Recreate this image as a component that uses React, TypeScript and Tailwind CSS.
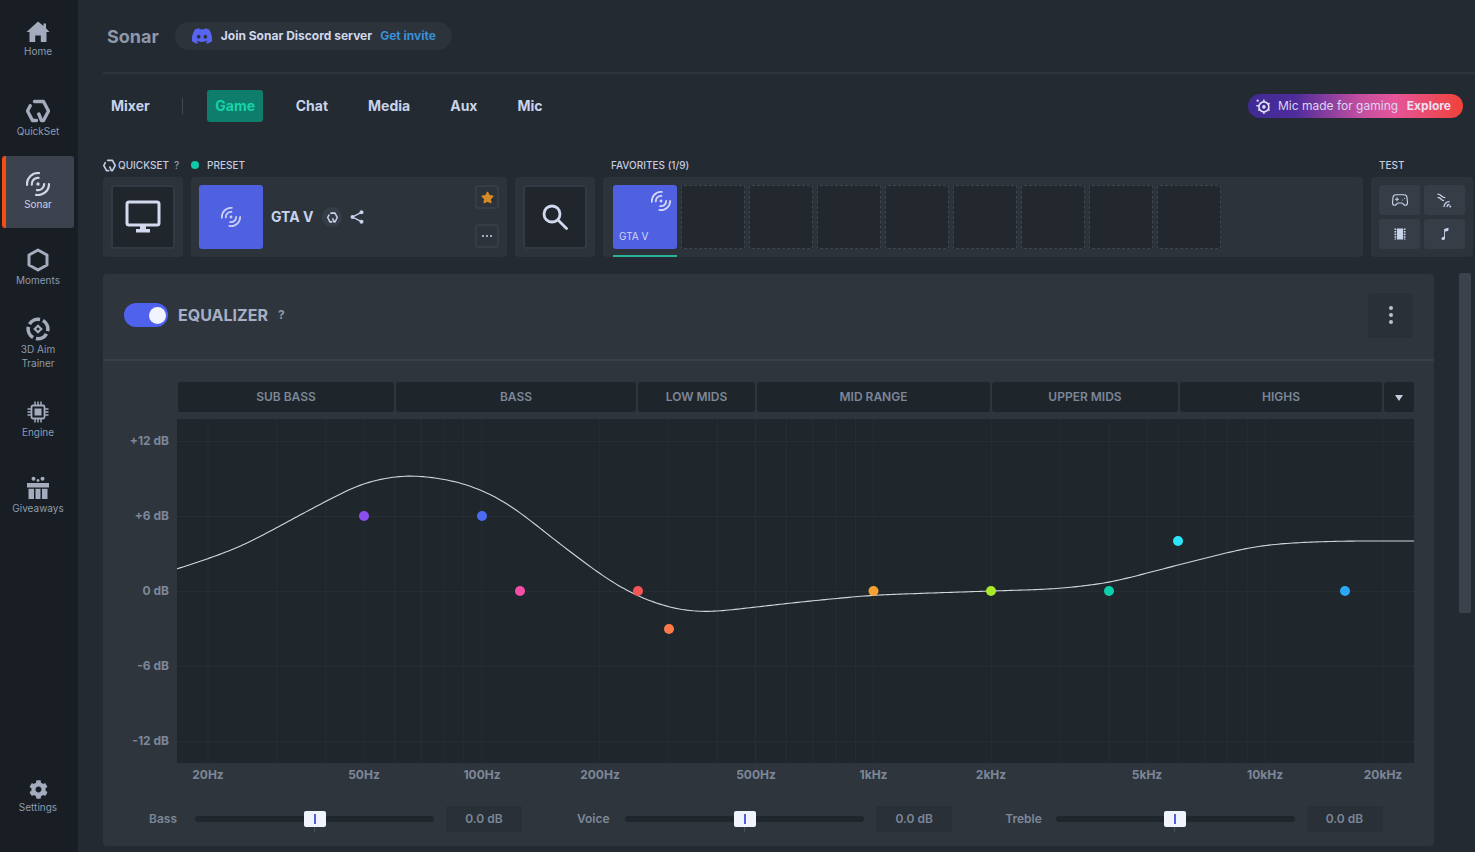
import { Gamepad2 } from "lucide-react";
import { FaCog, FaDiscord, FaStar } from "react-icons/fa";
import { IoMusicalNote } from "react-icons/io5";

const polar = (r: number, deg: number) => {
  const a = (deg * Math.PI) / 180;
  return `${(12 + r * Math.cos(a)).toFixed(2)} ${(12 + r * Math.sin(a)).toFixed(2)}`;
};
const arc = (r: number, from: number, to: number) =>
  `M${polar(r, from)} A${r} ${r} 0 0 1 ${polar(r, to)}`;

function SonarIcon({ size = 24, className = "" }: { size?: number; className?: string }) {
  return (
    <svg width={size} height={size} viewBox="0 0 24 24" fill="none" stroke="currentColor" strokeWidth="2.2" strokeLinecap="round" className={className}>
      <path d={arc(11, 175, 275)} />
      <path d={arc(6.2, 175, 275)} />
      <path d={arc(11, 0, 100)} />
      <path d={arc(6.2, 0, 100)} />
      <circle cx="12" cy="12" r="1.7" fill="currentColor" stroke="none" />
    </svg>
  );
}

function QuickSetIcon({ size = 24, width = 3.4, className = "" }: { size?: number; width?: number; className?: string }) {
  return (
    <svg width={size} height={size} viewBox="0 0 24 24" fill="none" stroke="currentColor" strokeWidth={width} strokeLinejoin="round" strokeLinecap="round" className={className}>
      <path d="M8.5 2.5H17.5L22.5 12L17.5 21.5H15.5L12.8 15" />
      <path d="M10.5 21.5H6.5L1.5 12L4.2 6.8" />
    </svg>
  );
}

function HomeIcon() {
  return (
    <svg width="24" height="22" viewBox="0 0 24 22" fill="currentColor">
      <path d="M12 0.5L17.5 5V2.5H20V7.2L23.5 11H20.5V21H14.8V14.5H9.2V21H3.5V11H0.5Z" />
    </svg>
  );
}

function MomentsIcon() {
  return (
    <svg width="24" height="24" viewBox="0 0 24 24" fill="none" stroke="currentColor" strokeWidth="3" strokeLinejoin="round">
      <path d="M12 2L21 7V17L12 22L3 17V7Z" />
    </svg>
  );
}

function AimIcon() {
  return (
    <svg width="24" height="24" viewBox="0 0 24 24" fill="none" stroke="currentColor" strokeLinecap="butt">
      <g strokeWidth="3.6">
        <path d={arc(9.8, 300, 372)} />
        <path d={arc(9.8, 30, 102)} />
        <path d={arc(9.8, 120, 192)} />
        <path d={arc(9.8, 210, 282)} />
      </g>
      <path d="M12 7.2L16.8 12L12 16.8L7.2 12Z" fill="currentColor" stroke="none" />
      <path d="M12 10.2L13.8 12L12 13.8L10.2 12Z" fill="#181e23" stroke="none" />
    </svg>
  );
}

function ChipIcon() {
  return (
    <svg width="24" height="24" viewBox="0 0 24 24" fill="none" stroke="currentColor">
      <rect x="5.5" y="5.5" width="13" height="13" rx="1.5" strokeWidth="1.8" />
      <rect x="8.5" y="8.5" width="7" height="7" fill="currentColor" stroke="none" />
      <path d="M9 1.5V5M12 1.5V5M15 1.5V5M9 19V22.5M12 19V22.5M15 19V22.5M1.5 9H5M1.5 12H5M1.5 15H5M19 9H22.5M19 12H22.5M19 15H22.5" strokeWidth="1.5" />
    </svg>
  );
}

function GiftIcon() {
  return (
    <svg width="24" height="24" viewBox="0 0 24 24" fill="currentColor">
      <circle cx="7.5" cy="2.8" r="2" />
      <circle cx="16.5" cy="2.8" r="2" />
      <circle cx="12" cy="4.5" r="1.4" />
      <rect x="1" y="7" width="22" height="4.5" />
      <rect x="2.5" y="12.8" width="5.5" height="10.2" />
      <rect x="9.5" y="12.8" width="5" height="10.2" />
      <rect x="16" y="12.8" width="5.5" height="10.2" />
    </svg>
  );
}

function MonitorIcon() {
  return (
    <svg width="36" height="34" viewBox="0 0 36 34" fill="none">
      <rect x="2" y="2" width="32" height="23" rx="2" stroke="#d3daf0" strokeWidth="3" />
      <rect x="15" y="26" width="6" height="4" fill="#d3daf0" />
      <rect x="11" y="29" width="14" height="3.5" fill="#d3daf0" />
    </svg>
  );
}

function SearchIcon() {
  return (
    <svg width="26" height="26" viewBox="0 0 26 26" fill="none" stroke="#d3daf0" strokeWidth="2.8" strokeLinecap="round">
      <circle cx="10" cy="10" r="8" />
      <path d="M16 16L24.5 24.5" />
    </svg>
  );
}

function ShareIcon() {
  return (
    <svg width="14" height="14" viewBox="0 0 14 14" fill="#c8d3ec" stroke="#c8d3ec" strokeWidth="1.4">
      <path d="M11.5 2.3L2.5 7L11.5 11.7" fill="none" />
      <circle cx="11.5" cy="2.3" r="2" stroke="none" />
      <circle cx="2.5" cy="7" r="2" stroke="none" />
      <circle cx="11.5" cy="11.7" r="2" stroke="none" />
    </svg>
  );
}

function SteelIcon() {
  return (
    <svg width="16" height="16" viewBox="0 0 18 18" fill="none" stroke="#e4e2f6">
      <circle cx="10" cy="10" r="5.6" strokeWidth="1.8" />
      <circle cx="10" cy="10" r="2" fill="#e4e2f6" stroke="none" />
      <path d="M10 1.8V4M16.6 6L14.8 7M16.6 14L14.8 13M10 18V16M3.4 14L5.2 13M1.4 8.6L4.2 9" strokeWidth="1.6" />
      <circle cx="3" cy="3" r="1.3" fill="#e4e2f6" stroke="none" />
    </svg>
  );
}

function WavesIcon() {
  return (
    <svg width="15" height="15" viewBox="0 0 15 15" fill="none" stroke="#c8d3ec" strokeWidth="1.3" strokeLinecap="round">
      <path d="M1 1.2C3.4 1.4 4.2 2.6 5.2 3.6C6 4.3 6.8 4.6 7.8 4.7" />
      <path d="M1 4.4C3 4.6 3.6 5.6 4.4 6.4C5 7 5.6 7.4 6.4 7.5" />
      <path d="M7 13.5C7.1 11 9.4 8.8 12 8.7" />
      <path d="M10 13.5C10.1 12.4 11 11.6 12 11.5" />
      <circle cx="13.2" cy="13.4" r="1" fill="#c8d3ec" stroke="none" />
    </svg>
  );
}

function FilmIcon() {
  return (
    <svg width="12" height="12" viewBox="0 0 12 12" fill="#c8d3ec">
      <path d="M0.5 0.5H2.3V2H0.5ZM0.5 3H2.3V4.6H0.5ZM0.5 5.6H2.3V7.2H0.5ZM0.5 8.2H2.3V9.8H0.5ZM0.5 10.4H2.3V11.5H0.5Z" />
      <path d="M9.7 0.5H11.5V2H9.7ZM9.7 3H11.5V4.6H9.7ZM9.7 5.6H11.5V7.2H9.7ZM9.7 8.2H11.5V9.8H9.7ZM9.7 10.4H11.5V11.5H9.7Z" />
      <rect x="3" y="0.5" width="6" height="11" />
    </svg>
  );
}

const navItems = [
  { label: ["Home"], icon: <HomeIcon /> },
  { label: ["QuickSet"], icon: <QuickSetIcon />, nudge: "mt-[3px] -mb-[3px]" },
  { label: ["Sonar"], icon: <SonarIcon />, active: true },
  { label: ["Moments"], icon: <MomentsIcon /> },
  { label: ["3D Aim", "Trainer"], icon: <AimIcon /> },
  { label: ["Engine"], icon: <ChipIcon /> },
  { label: ["Giveaways"], icon: <GiftIcon /> },
];

function NavItem({ label, icon, active, nudge = "" }: { label: string[]; icon: React.ReactNode; active?: boolean; nudge?: string }) {
  return (
    <div
      className={
        active
          ? "w-[72px] h-[72px] rounded-[3px] border-l-4 border-[#f04e13] bg-[#3c434e] flex flex-col items-center justify-center pr-1 pb-[2px]"
          : `w-[72px] h-[72px] flex flex-col items-center justify-center text-[#8f9aae] pb-[2px] ${nudge}`
      }
    >
      <div className={active ? "text-[#d0d6e6]" : "text-[#a3abbd]"}>{icon}</div>
      <div className={active ? "mt-px text-[10px] leading-[14px] text-center text-[#c6cfe5]" : "mt-px text-[10px] leading-[14px] text-center"}>
        {label.map((l) => (
          <div key={l}>{l}</div>
        ))}
      </div>
    </div>
  );
}

function Sidebar() {
  return (
    <aside className="w-[78px] shrink-0 h-full bg-[#181e23] flex flex-col items-start pl-[2px] pt-1 gap-1 pb-[18px]">
      {navItems.map((item) => (
        <NavItem key={item.label[0]} {...item} />
      ))}
      <div className="mt-auto">
        <NavItem label={["Settings"]} icon={<FaCog size={19} />} />
      </div>
    </aside>
  );
}

function Header() {
  return (
    <header className="h-[74px] border-b-2 border-[#2d343b] flex items-center pl-1">
      <span className="text-[18px] font-bold text-[#8e98aa]">Sonar</span>
      <div className="ml-4 h-7 rounded-full bg-[#2c333b] flex items-center pl-4 pr-4">
        <FaDiscord size={22} className="text-[#5865f2]" />
        <span className="ml-2 text-[12px] font-bold text-[#d0d8ec]">Join Sonar Discord server</span>
        <span className="ml-2 text-[12px] font-bold text-[#3a8fd8]">Get invite</span>
      </div>
    </header>
  );
}

function Tabs() {
  return (
    <div className="mt-4 h-8 flex items-center gap-6 text-[14px] font-bold text-[#c8d3ec] pr-3">
      <span className="px-2 pb-px">Mixer</span>
      <span className="w-px h-4 bg-[#434a54]" />
      <span className="w-14 h-8 pb-px pl-px rounded-[3px] bg-[#0e7d6b] text-[#14d3a9] flex items-center justify-center">Game</span>
      <span className="ml-px px-2 pb-px">Chat</span>
      <span className="px-2 pb-px">Media</span>
      <span className="px-2 pb-px">Aux</span>
      <span className="px-2 pb-px">Mic</span>
      <div className="ml-auto h-6 w-[215px] rounded-full bg-[linear-gradient(90deg,#3e2a92_0%,#4f2c9c_22%,#c24f9f_52%,#e5559a_68%,#f04238_100%)] flex items-center pl-[7px] pr-3 text-[12px]">
        <SteelIcon />
        <span className="ml-[7px] font-normal text-[#d9d6f4]">Mic made for gaming</span>
        <span className="ml-auto font-bold text-[#efdff0]">Explore</span>
      </div>
    </div>
  );
}

function Label({ children, className = "" }: { children?: React.ReactNode; className?: string }) {
  return <div className={`h-3 flex items-center text-[10px] leading-3 font-medium text-[#c4cce0] ${className}`}>{children}</div>;
}

function Topics() {
  return (
    <div className="mt-[37px] flex gap-2 text-[10px]">
      <div className="w-20">
        <Label>
          <QuickSetIcon size={13} width={3} className="text-[#c4cce0]" />
          <span className="ml-[2px]">QUICKSET</span>
          <span className="ml-[5px] text-[#8e98aa]">?</span>
        </Label>
        <div className="mt-[6px] h-20 rounded bg-[#2c333b] flex items-center justify-center">
          <div className="w-16 h-16 rounded-[3px] border-2 border-[#333a43] bg-[#20262c] flex items-center justify-center">
            <MonitorIcon />
          </div>
        </div>
      </div>

      <div className="w-[316px]">
        <Label>
          <span className="w-2 h-2 rounded-full bg-[#0fc9a7]" />
          <span className="ml-2">PRESET</span>
        </Label>
        <div className="mt-[6px] h-20 rounded bg-[#2c333b] flex items-center pl-2 pr-2">
          <div className="w-16 h-16 rounded-[3px] bg-[#4f60e0] flex items-center justify-center text-[#c9cff5]">
            <SonarIcon size={20} />
          </div>
          <span className="ml-2 pb-[2px] text-[14px] font-bold text-[#c8d3ec]">GTA V</span>
          <span className="ml-[9px] w-5 h-5 rounded-full bg-[#363d46] flex items-center justify-center text-[#c8d3ec]">
            <QuickSetIcon size={11} width={3.4} />
          </span>
          <span className="ml-2">
            <ShareIcon />
          </span>
          <div className="ml-auto h-16 flex flex-col justify-between">
            <div className="w-6 h-6 rounded-[3px] border-2 border-[#363d46] flex items-center justify-center">
              <FaStar size={13} className="text-[#d58a28]" />
            </div>
            <div className="w-6 h-6 rounded-[3px] border-2 border-[#363d46] flex items-center justify-center gap-[2px] mb-px">
              <span className="w-[2px] h-[2px] rounded-full bg-[#c8d3ec]" />
              <span className="w-[2px] h-[2px] rounded-full bg-[#c8d3ec]" />
              <span className="w-[2px] h-[2px] rounded-full bg-[#c8d3ec]" />
            </div>
          </div>
        </div>
      </div>

      <div className="w-20">
        <Label />
        <div className="mt-[6px] h-20 rounded bg-[#2c333b] flex items-center justify-center">
          <div className="w-16 h-16 rounded-[3px] border-2 border-[#333a43] bg-[#20262c] flex items-center justify-center">
            <SearchIcon />
          </div>
        </div>
      </div>

      <div className="w-[760px]">
        <Label className="pl-2">FAVORITES (1/9)</Label>
        <div className="mt-[6px] h-20 rounded bg-[#2c333b] flex pl-[10px] pt-2 gap-1 relative">
          <div className="w-16 h-16 rounded-[3px] bg-[#4f60e0] text-[#d3d8f7] flex flex-col justify-between items-end p-[6px]">
            <SonarIcon size={20} />
            <span className="self-start text-[10px] leading-3 mb-[1px]">GTA V</span>
          </div>
          {[1, 2, 3, 4, 5, 6, 7, 8].map((slot) => (
            <div key={slot} className="w-16 h-16 rounded-[3px] border border-dashed border-[#3f464f] bg-[#22282e]" />
          ))}
          <div className="absolute left-[10px] bottom-0 w-16 h-[2px] bg-[#2bb39a]" />
        </div>
      </div>

      <div className="w-[102px]">
        <Label className="pl-2">TEST</Label>
        <div className="mt-[6px] h-20 rounded bg-[#2c333b] grid grid-cols-[41px_41px] grid-rows-[30px_30px] gap-1 p-2">
          <div className="rounded-[3px] bg-[#363d46] flex items-center justify-center">
            <Gamepad2 size={18} strokeWidth={1.5} className="text-[#c8d3ec]" />
          </div>
          <div className="rounded-[3px] bg-[#363d46] flex items-center justify-center">
            <WavesIcon />
          </div>
          <div className="rounded-[3px] bg-[#363d46] flex items-center justify-center">
            <FilmIcon />
          </div>
          <div className="rounded-[3px] bg-[#363d46] flex items-center justify-center">
            <IoMusicalNote size={14} className="text-[#c8d3ec]" />
          </div>
        </div>
      </div>
    </div>
  );
}

const bands = [
  { name: "SUB BASS", w: "w-[216px]" },
  { name: "BASS", w: "w-[240px]" },
  { name: "LOW MIDS", w: "w-[117px]" },
  { name: "MID RANGE", w: "w-[233px]" },
  { name: "UPPER MIDS", w: "w-[186px]" },
  { name: "HIGHS", w: "w-[202px]" },
];

// x on screen for a frequency: 20Hz sits at 208, one octave is 118px
const freqX = (hz: number) => 208 + Math.log2(hz / 20) * 117.9;

const gridFreqs = [
  20, 30, 40, 50, 60, 70, 80, 90, 100, 200, 300, 400, 500, 600, 700, 800, 900, 1000, 2000, 3000, 4000, 5000, 6000, 7000,
  8000, 9000, 10000, 20000,
];

// traced from the picture; runs past both edges of the plot, the svg clips it
const curve: [number, number][] = [
  [110, 586], [177, 569.5], [241, 547], [313, 508], [363, 482], [409, 474], [463, 482], [506, 501], [556, 541],
  [609, 581], [638, 597], [670, 608.5], [704, 613], [800, 602], [873, 595], [991, 591], [1057, 589], [1109, 583],
  [1178, 565], [1250, 547], [1286, 543], [1341, 541], [1480, 541],
];

const sampleY = (x: number) => {
  const i = curve.findIndex((p) => p[0] >= x);
  if (i <= 0) return curve[Math.max(i, 0)][1];
  const [x0, y0] = curve[i - 1];
  const [x1, y1] = curve[i];
  return y0 + ((x - x0) / (x1 - x0)) * (y1 - y0);
};

// blur the straight segments a few times so the line comes out as one smooth curve
const blur = (ys: number[], r: number) =>
  ys.map((_, i) => {
    const part = ys.slice(Math.max(i - r, 0), i + r + 1);
    return part.reduce((a, b) => a + b, 0) / part.length;
  });

const curvePath = (() => {
  const xs = Array.from({ length: 1370 }, (_, i) => 110 + i);
  let ys = xs.map(sampleY);
  for (let i = 0; i < 3; i++) ys = blur(ys, 16);
  return xs
    .filter((x) => x % 3 === 0)
    .map((x, i) => `${i === 0 ? "M" : "L"}${x} ${ys[x - 110].toFixed(2)}`)
    .join(" ");
})();

const points = [
  { x: 364, y: 516, c: "#8b4ff0" },
  { x: 482, y: 516, c: "#4d6bf0" },
  { x: 520, y: 591, c: "#f54da8" },
  { x: 638, y: 591, c: "#f55454" },
  { x: 669, y: 629, c: "#ff7a4a" },
  { x: 873.5, y: 591, c: "#f5a030" },
  { x: 991, y: 591, c: "#a6ea28" },
  { x: 1109, y: 591, c: "#0dcfae" },
  { x: 1178, y: 541, c: "#2de5fa" },
  { x: 1345, y: 591, c: "#2aa8f5" },
];

const freqLabels = [
  { t: "20Hz", x: 208 },
  { t: "50Hz", x: 364 },
  { t: "100Hz", x: 482 },
  { t: "200Hz", x: 600 },
  { t: "500Hz", x: 756 },
  { t: "1kHz", x: 873.5 },
  { t: "2kHz", x: 991 },
  { t: "5kHz", x: 1147 },
  { t: "10kHz", x: 1265 },
  { t: "20kHz", x: 1383 },
];

function Graph() {
  return (
    <div className="mt-[7px] flex">
      <div className="w-[66px] h-[344px] py-[15px] flex flex-col justify-between items-end text-[12px] leading-[14px] font-bold text-[#7d8798]">
        <span>+12 dB</span>
        <span>+6 dB</span>
        <span>0 dB</span>
        <span>-6 dB</span>
        <span>-12 dB</span>
      </div>
      <svg width="1237" height="344" viewBox="177 419 1237 344" className="ml-2 bg-[#1f262c] block">
        {gridFreqs.map((f) => (
          <line key={f} x1={freqX(f)} x2={freqX(f)} y1="419" y2="763" stroke="#262e35" strokeWidth="1" />
        ))}
        {[441, 516, 591, 666, 741].map((y) => (
          <line key={y} x1="177" x2="1414" y1={y + 0.5} y2={y + 0.5} stroke="#262e35" strokeWidth="1" />
        ))}
        <path d={curvePath} fill="none" stroke="#d2d6dd" strokeWidth="1.1" />
        {points.map((p) => (
          <circle key={p.x} cx={p.x} cy={p.y} r="5" fill={p.c} />
        ))}
      </svg>
    </div>
  );
}

function Slider({ label, pos }: { label: string; pos: string }) {
  return (
    <div className="flex items-center">
      <span className="w-[60px] text-center text-[12px] font-semibold text-[#7d8798]">{label}</span>
      <div className="ml-[2px] w-[239px] h-[6px] rounded-full bg-[#1f262c] relative">
        <div className={`absolute ${pos} -top-[5px] w-[22px] h-4 rounded-[2px] bg-[#f2f4fd] flex items-center justify-center`}>
          <span className="w-[2px] h-[10px] bg-[#4f60e0]" />
        </div>
        <div className={`absolute ${pos} top-[11px] ml-[10px] w-px h-[5px] bg-[#4a515b]`} />
      </div>
      <div className="ml-3 w-[76px] h-[26px] rounded-[2px] bg-[#2a3037] flex items-center justify-center text-[12px] font-semibold text-[#7d8798]">
        0.0 dB
      </div>
    </div>
  );
}

function Equalizer() {
  return (
    <section className="w-[1331px] h-[572px] shrink-0 rounded bg-[#2e353d]">
      <div className="h-[87px] border-b-2 border-[#383f48] flex items-center pl-[21px] pr-[21px] pb-[3px]">
        <div className="w-11 h-6 rounded-full bg-[#4f62ee] flex items-center justify-end pr-[2px]">
          <span className="w-[17px] h-[17px] rounded-full bg-[#f2f4fd]" />
        </div>
        <span className="ml-[10px] text-[16px] font-bold text-[#a6afc4]">EQUALIZER</span>
        <span className="ml-[10px] text-[12px] font-bold text-[#8e98aa]">?</span>
        <div className="ml-auto w-[45px] h-[45px] rounded bg-[#2a3037] flex flex-col items-center justify-center gap-[3px]">
          <span className="w-1 h-1 rounded-full bg-[#b9c0d2]" />
          <span className="w-1 h-1 rounded-full bg-[#b9c0d2]" />
          <span className="w-1 h-1 rounded-full bg-[#b9c0d2]" />
        </div>
      </div>

      <div className="mt-[21px] ml-[75px] flex gap-[2px] h-[30px]">
        {bands.map((b) => (
          <div key={b.name} className={`${b.w} rounded-[3px] bg-[#1e252b] flex items-center justify-center text-[12px] font-semibold text-[#7d8798]`}>
            {b.name}
          </div>
        ))}
        <div className="w-[30px] rounded-[3px] bg-[#1e252b] flex items-center justify-center">
          <span className="mt-[2px] w-0 h-0 border-x-[4px] border-x-transparent border-t-[6px] border-t-[#c4cce0]" />
        </div>
      </div>

      <Graph />

      <div className="relative h-6 text-[12px] leading-6 font-bold text-[#7d8798]">
        {freqLabels.map((f) => (
          <span key={f.t} className="absolute -translate-x-1/2" style={{ left: f.x - 103 }}>
            {f.t}
          </span>
        ))}
      </div>

      <div className="mt-[19px] ml-[30px] flex gap-[41.25px]">
        <Slider label="Bass" pos="left-[109px]" />
        <Slider label="Voice" pos="left-[109px]" />
        <Slider label="Treble" pos="left-[108px]" />
      </div>
    </section>
  );
}

export default function App() {
  return (
    <div className="w-[1475px] h-[852px] overflow-hidden flex bg-[#242a31] font-['Inter',sans-serif]">
      <Sidebar />
      <main className="flex-1 pl-[25px]">
        <Header />
        <Tabs />
        <Topics />
        <div className="mt-[17px] flex">
          <Equalizer />
          <div className="ml-[25px] -mt-px w-3 h-[340px] rounded-[2px] bg-[#3b424c]" />
        </div>
      </main>
    </div>
  );
}
